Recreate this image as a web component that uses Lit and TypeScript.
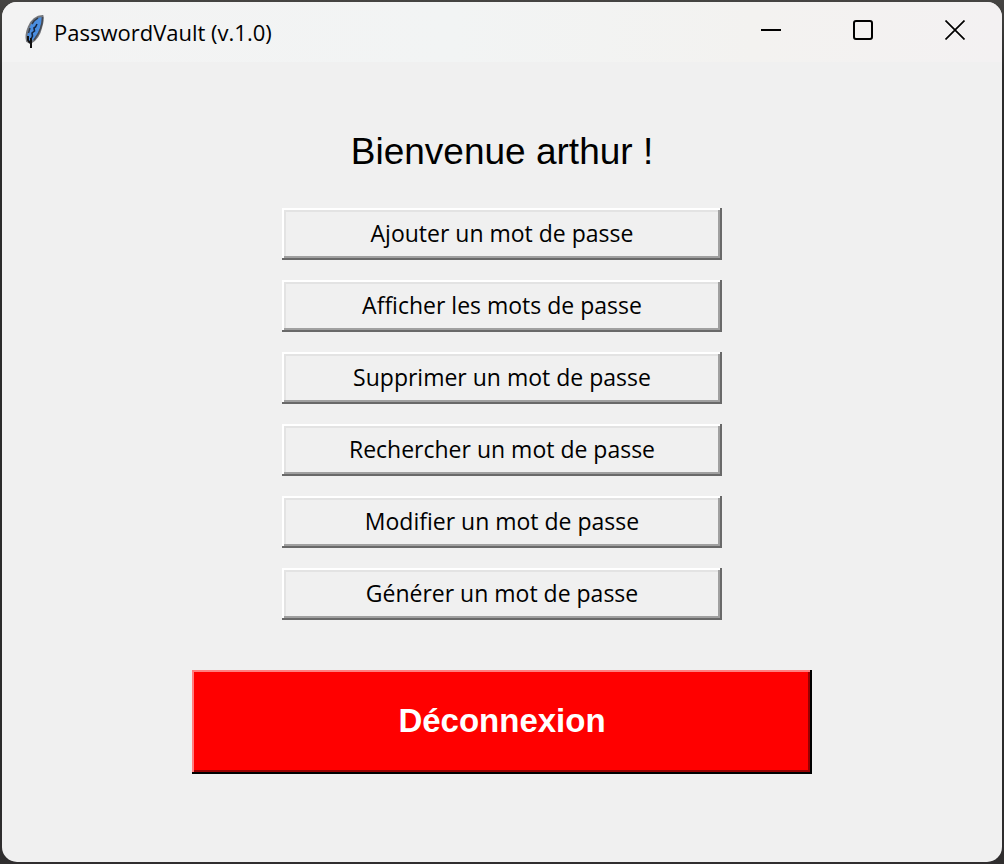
import { LitElement, html, css } from "lit";
import { customElement, property } from "lit/decorators.js";

@customElement("window-bar")
class WindowBar extends LitElement {
  @property() heading = "";

  static styles = css`
    :host {
      display: block;
    }
    .bar {
      display: flex;
      align-items: center;
      height: 60px;
      padding: 0 1px 0 20px;
      background: linear-gradient(90deg, #f3f3f3, #f2f4f4 45%, #f3f2f0 75%, #f3f1f2);
    }
    .feather {
      width: 24px;
      height: 36px;
      margin-right: 8px;
      flex: none;
    }
    .heading {
      flex: 1;
      font: 400 22px/32px "Open Sans", "Noto Sans", sans-serif;
      color: #000;
      white-space: nowrap;
    }
    .controls {
      display: flex;
      align-self: stretch;
    }
    .control {
      display: grid;
      place-items: center;
      width: 92px;
      height: 56px;
      padding: 0;
      border: 0;
      background: none;
      color: #000;
    }
    .glyph {
      width: 20px;
      height: 20px;
      fill: none;
      stroke: currentColor;
      stroke-width: 2;
    }
  `;

  render() {
    return html`
      <header class="bar">
        <svg class="feather" viewBox="0 0 24 36" aria-hidden="true">
          <path d="M20.500 2 C15 2 9 6.500 6.500 13.500 C4.500 18.500 4 23 5 27 L8.500 29 C13.500 26 17.500 21 19 14 C20.500 9 21.500 5 20.500 2Z" fill="#4a8ee0" stroke="#74777d" stroke-width="2"/>
          <path d="M20.500 3 L20 9 L18.500 14.500 L16 20 L12 26" fill="none" stroke="#454a54" stroke-width="1.500"/>
          <path d="M16 4 L12 7 L10 10 M8 14 L6.500 19" fill="none" stroke="#333a46" stroke-width="1.500"/>
          <path d="M15 10 L13.500 13 L12 14 L12.500 17 L10 19 L10.500 22 L9 25" fill="none" stroke="#14243f" stroke-width="1.600"/>
          <path d="M6 22 V26 L8 29 M9 24 V34" fill="none" stroke="#111" stroke-width="2"/>
        </svg>
        <span class="heading">${this.heading}</span>
        <div class="controls">
          <button class="control" type="button" aria-label="Réduire">
            <svg class="glyph" viewBox="0 0 20 20"><path d="M0 10H20" /></svg>
          </button>
          <button class="control" type="button" aria-label="Agrandir">
            <svg class="glyph" viewBox="0 0 20 20"><rect x="1" y="1" width="18" height="18" rx="2" /></svg>
          </button>
          <button class="control" type="button" aria-label="Fermer">
            <svg class="glyph" viewBox="0 0 20 20"><path d="M.5 .5L19.500 19.500M19.500 .5L.5 19.500" stroke-width="1.700" /></svg>
          </button>
        </div>
      </header>
    `;
  }
}

@customElement("app-root")
class AppRoot extends LitElement {
  private actions = [
    "Ajouter un mot de passe",
    "Afficher les mots de passe",
    "Supprimer un mot de passe",
    "Rechercher un mot de passe",
    "Modifier un mot de passe",
    "Générer un mot de passe",
  ];

  static styles = css`
    :host {
      display: flex;
      box-sizing: border-box;
      min-height: 100vh;
      padding: 2px;
      background: linear-gradient(#454442, #2b2b2b 8%, #2b2b2b 92%, #302e2f);
    }
    .window {
      flex: 1;
      min-width: 0;
      border-radius: 15px;
      overflow: hidden;
      background: #f0f0f0;
    }
    .content {
      display: flex;
      flex-direction: column;
      align-items: center;
      padding: 64px 20px 40px;
    }
    .welcome {
      margin: 0 0 30px;
      font: 400 37px/52px "Liberation Sans", Arial, sans-serif;
      color: #000;
    }
    .actions {
      display: flex;
      flex-direction: column;
      gap: 20px;
      width: 100%;
      max-width: 440px;
    }
    .action,
    .logout {
      border: 0;
      border-radius: 0;
      padding: 0 8px 2px;
    }
    .action {
      height: 52px;
      background: #f0f0f0;
      color: #000;
      font: 400 23px/32px "Open Sans", "Noto Sans", sans-serif;
      font-variant-ligatures: none;
      box-shadow:
        inset -2px -2px #696969,
        inset 2px 2px #ffffff,
        inset -4px -4px #a0a0a0,
        inset 4px 4px #e3e3e3;
    }
    .logout {
      width: 100%;
      max-width: 620px;
      height: 104px;
      margin-top: 50px;
      background: #ff0000;
      color: #fff;
      font: 700 33px/40px "Liberation Sans", Arial, sans-serif;
      box-shadow:
        inset -2px -2px #000000,
        inset 2px 2px #ff7f7f,
        inset -4px -4px #990000;
    }
  `;

  render() {
    return html`
      <div class="window">
        <window-bar heading="PasswordVault (v.1.0)"></window-bar>
        <main class="content">
          <h1 class="welcome">Bienvenue arthur !</h1>
          <nav class="actions">
            ${this.actions.map((label) => html`<button class="action" type="button">${label}</button>`)}
          </nav>
          <button class="logout" type="button">Déconnexion</button>
        </main>
      </div>
    `;
  }
}
